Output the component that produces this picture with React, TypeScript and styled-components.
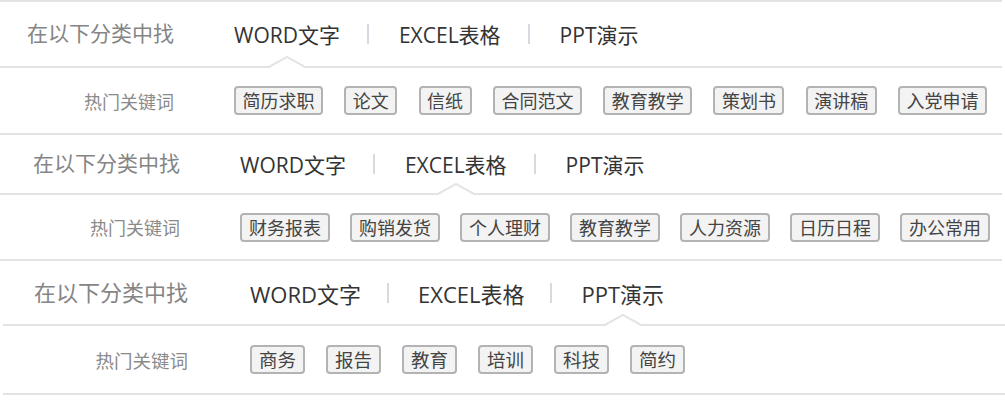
import React from 'react';
import styled, { createGlobalStyle } from 'styled-components';

const GlobalStyle = createGlobalStyle`
	html, body {
		margin: 0;
		padding: 0;
		background: #ffffff;
	}
	body {
		overflow: hidden;
		font-family: "Open Sans", "Noto Sans CJK SC", sans-serif;
	}
`;

const LINE = '#e3e3e3';

const PanelUI = styled.section<{ $shift: number; $top: boolean }>`
	width: 1002px;
	margin-left: ${(p) => p.$shift}px;
	border-top: ${(p) => (p.$top ? `2px solid ${LINE}` : 'none')};
`;

const HeaderUI = styled.div<{ $col: number; $gap: number; $h: number }>`
	display: grid;
	grid-template-columns: ${(p) => p.$col}px 1fr;
	column-gap: ${(p) => p.$gap}px;
	height: ${(p) => p.$h}px;
	border-bottom: 2px solid ${LINE};
`;

const TitleUI = styled.div<{ $fs: number }>`
	align-self: center;
	color: #858585;
	font-size: ${(p) => p.$fs}px;
	line-height: 1.2;
	text-align: right;
	white-space: nowrap;
`;

const TabsUI = styled.div`
	display: flex;
	align-items: stretch;
`;

const TabUI = styled.div<{ $fs: number }>`
	position: relative;
	display: flex;
	align-items: center;
	color: #333333;
	font-size: ${(p) => p.$fs}px;
	white-space: nowrap;
	cursor: pointer;
`;

const NotchUI = styled.svg`
	position: absolute;
	bottom: -2px;
	left: 50%;
	width: 36px;
	height: 12px;
	transform: translateX(-50%);
`;

const SepUI = styled.span<{ $l: number; $r: number }>`
	align-self: center;
	width: 2px;
	height: 20px;
	margin: 0 ${(p) => p.$r}px 0 ${(p) => p.$l}px;
	background: #d6dae0;
`;

const RowUI = styled.div<{ $col: number; $gap: number; $h: number }>`
	display: grid;
	grid-template-columns: ${(p) => p.$col}px 1fr;
	column-gap: ${(p) => p.$gap}px;
	align-items: center;
	height: ${(p) => p.$h}px;
	border-bottom: 2px solid ${LINE};
`;

const LabelUI = styled.div<{ $fs: number }>`
	color: #8a8a8a;
	font-size: ${(p) => p.$fs}px;
	text-align: right;
	white-space: nowrap;
`;

const TagListUI = styled.div<{ $gap: number }>`
	display: flex;
	gap: ${(p) => p.$gap}px;
`;

const TagUI = styled.button<{ $fs: number; $pad: number }>`
	box-sizing: border-box;
	height: 29px;
	padding: 0 ${(p) => p.$pad}px;
	color: #444444;
	font-family: "Noto Sans CJK SC", sans-serif;
	font-size: ${(p) => p.$fs}px;
	line-height: 25px;
	background: #f3f3f3;
	border: 2px solid #b3b3b3;
	border-radius: 4px;
	cursor: pointer;
`;

type Panel = {
	active: number;
	tags: string[];
	shift: number;
	col: number;
	gap: number;
	head: number;
	row: number;
	fs: number;
	small: number;
	tagGap: number;
	tagPad: number;
	sepL: number;
	sepR: number;
};

const tabs = ['WORD文字', 'EXCEL表格', 'PPT演示'];

const panels: Panel[] = [
	{
		active: 0,
		tags: ['简历求职', '论文', '信纸', '合同范文', '教育教学', '策划书', '演讲稿', '入党申请'],
		shift: 0,
		col: 174,
		gap: 60,
		head: 64,
		row: 65,
		fs: 21,
		small: 18,
		tagGap: 21.3,
		tagPad: 6.5,
		sepL: 27,
		sepR: 30,
	},
	{
		active: 1,
		tags: ['财务报表', '购销发货', '个人理财', '教育教学', '人力资源', '日历日程', '办公常用'],
		shift: 0,
		col: 180,
		gap: 60,
		head: 58,
		row: 64,
		fs: 21,
		small: 18,
		tagGap: 20,
		tagPad: 7,
		sepL: 27,
		sepR: 30,
	},
	{
		active: 2,
		tags: ['商务', '报告', '教育', '培训', '科技', '简约'],
		shift: 3,
		col: 185,
		gap: 62,
		head: 63,
		row: 67,
		fs: 22,
		small: 18.5,
		tagGap: 21,
		tagPad: 7,
		sepL: 26,
		sepR: 29,
	},
];

const Notch = () => (
	<NotchUI viewBox='0 0 36 12'>
		<polygon points='0,12 18,2 36,12' fill='#ffffff' />
		<polyline points='0,11 18,1 36,11' fill='none' stroke={LINE} strokeWidth='2' />
	</NotchUI>
);

const renderTabsJSX = (p: Panel) =>
	tabs.map((t, i) => (
		<React.Fragment key={t}>
			{i > 0 && <SepUI $l={p.sepL} $r={p.sepR} />}
			<TabUI $fs={p.fs}>
				{t}
				{i === p.active && <Notch />}
			</TabUI>
		</React.Fragment>
	));

const App = () => (
	<>
		<GlobalStyle />
		{panels.map((p, idx) => (
			<PanelUI key={idx} $shift={p.shift} $top={idx === 0}>
				<HeaderUI $col={p.col} $gap={p.gap} $h={p.head}>
					<TitleUI $fs={p.fs}>在以下分类中找</TitleUI>
					<TabsUI>{renderTabsJSX(p)}</TabsUI>
				</HeaderUI>
				<RowUI $col={p.col} $gap={p.gap} $h={p.row}>
					<LabelUI $fs={p.small}>热门关键词</LabelUI>
					<TagListUI $gap={p.tagGap}>
						{p.tags.map((tag) => (
							<TagUI key={tag} $fs={p.small} $pad={p.tagPad}>
								{tag}
							</TagUI>
						))}
					</TagListUI>
				</RowUI>
			</PanelUI>
		))}
	</>
);

export default App;
